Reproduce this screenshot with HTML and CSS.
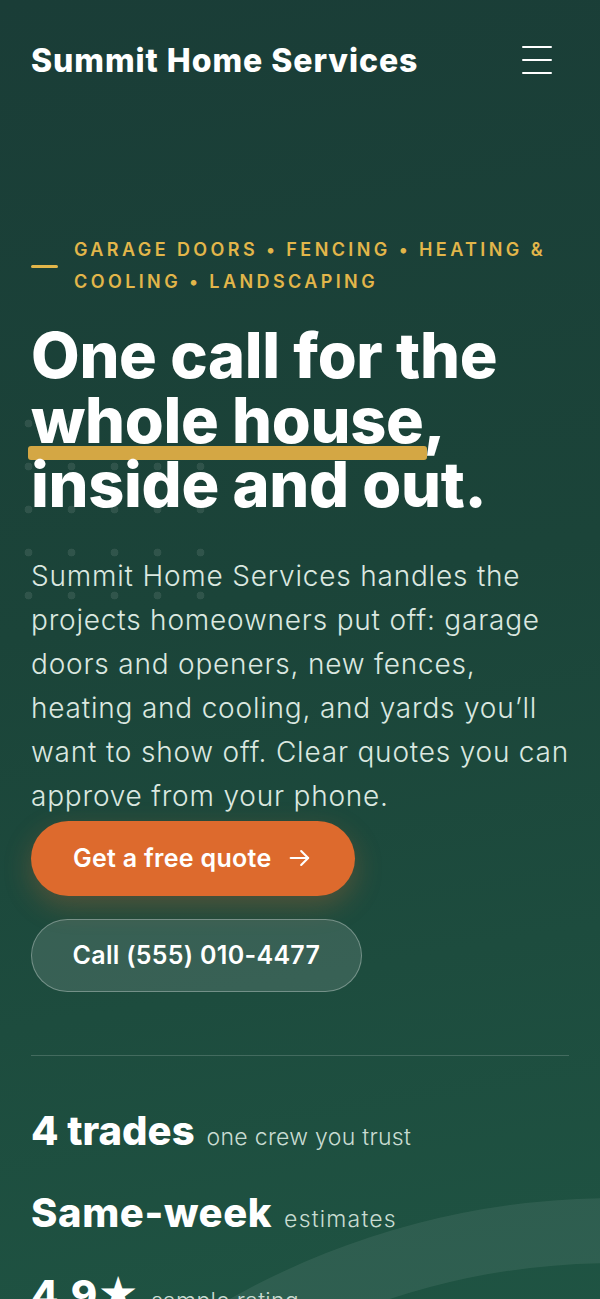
FILE: index.html
```html
<!DOCTYPE html>
<html lang="en">
<head>
<meta charset="utf-8">
<title>Summit Home Services</title>
<link rel="stylesheet" href="styles.css">
</head>
<body>
<div class="page">
  <div class="arc"></div>
  <div class="dots"></div>
  <header class="topbar">
    <div class="brand">Summit Home Services</div>
    <button class="menu" aria-label="Menu">
      <span></span><span></span><span></span>
    </button>
  </header>
  <main class="hero">
    <div class="eyebrow">
      <span class="dash"></span>
      <span class="eyebrow-text">GARAGE DOORS • FENCING • HEATING &amp; COOLING • LANDSCAPING</span>
    </div>
    <h1 class="title">One call for the <span class="mark">whole house</span>, inside and out.</h1>
    <p class="lead">Summit Home Services handles the projects homeowners put off: garage doors and openers, new fences, heating and cooling, and yards you’ll want to show off. Clear quotes you can approve from your phone.</p>
    <div class="actions">
      <a class="btn btn-primary" href="#"><span>Get a free quote</span>
        <svg class="arrow" viewBox="0 0 24 24" width="28" height="28" fill="none" stroke="currentColor" stroke-width="1.8" stroke-linecap="round" stroke-linejoin="round"><path d="M4 12h15"/><path d="M13 6l6 6-6 6"/></svg>
      </a>
      <a class="btn btn-ghost" href="#">Call (555) 010-4477</a>
    </div>
    <hr class="rule">
    <ul class="stats">
      <li><strong>4 trades</strong><span>one crew you trust</span></li>
      <li><strong class="wide">Same-week</strong><span class="wide">estimates</span></li>
      <li><strong>4.9★</strong><span>sample rating</span></li>
    </ul>
  </main>
</div>
</body>
</html>
```
FILE: styles.css
```css
* { box-sizing: border-box; }
html, body { margin: 0; padding: 0; }
body {
  font-family: Inter, "Noto Sans", sans-serif;
  background: #1b4139;
  color: #fff;
  overflow: hidden;
}
.page {
  position: relative;
  min-height: 1299px;
  overflow: hidden;
  background: linear-gradient(170deg, #1a3d37 0%, #1b4439 45%, #1f5443 100%);
  padding: 0 31px;
}
.arc {
  position: absolute;
  left: -170px;
  top: 1198px;
  width: 1570px;
  height: 1570px;
  border-radius: 50%;
  border: 65px solid rgba(255,255,255,0.075);
  pointer-events: none;
}
.dots {
  position: absolute;
  left: 7px;
  top: 402px;
  width: 215px;
  height: 215px;
  background-image: radial-gradient(circle, rgba(255,255,255,0.09) 3.6px, transparent 4.2px);
  background-size: 43px 43px;
  pointer-events: none;
}
.topbar {
  position: relative;
  display: flex;
  align-items: center;
  justify-content: space-between;
  height: 120px;
}
.brand {
  font-weight: 800;
  font-size: 32px;
  letter-spacing: 0.95px;
}
.menu {
  display: flex;
  flex-direction: column;
  gap: 10.5px;
  background: none;
  border: 0;
  padding: 0;
  margin-right: 17px;
  width: 30px;
}
.menu span {
  display: block;
  height: 2.5px;
  width: 30px;
  background: #fff;
  border-radius: 2px;
}
.hero { position: relative; padding-top: 114px; }
.eyebrow {
  display: flex;
  align-items: center;
  gap: 16px;
}
.dash {
  flex: 0 0 27px;
  height: 3px;
  background: #e2b64a;
  border-radius: 2px;
}
.eyebrow-text {
  color: #e2b64a;
  font-weight: 600;
  font-size: 18px;
  letter-spacing: 3.4px;
  line-height: 32px;
}
.title {
  position: relative;
  z-index: 0;
  margin: 25px 0 0;
  font-weight: 800;
  font-size: 63px;
  line-height: 64.5px;
  letter-spacing: -0.3px;
}
.mark {
  position: relative;
  white-space: nowrap;
}
.mark::after {
  content: "";
  position: absolute;
  left: -3px;
  right: -3px;
  bottom: -2px;
  height: 14px;
  background: #d4a744;
  border-radius: 3px;
  z-index: -1;
}
.lead {
  margin: 37px -10px 0 0;
  font-weight: 300;
  font-size: 28px;
  line-height: 44px;
  letter-spacing: 0.8px;
  color: #dbe8e0;
}
.actions {
  display: flex;
  flex-direction: column;
  align-items: flex-start;
  gap: 23px;
  margin-top: 3px;
}
.btn {
  display: inline-flex;
  align-items: center;
  height: 75px;
  padding: 0 42px;
  border-radius: 40px;
  font-weight: 600;
  font-size: 25px;
  letter-spacing: 0.3px;
  color: #fff;
  text-decoration: none;
  white-space: nowrap;
}
.btn-primary {
  gap: 14px;
  padding-right: 41px;
  background: #dd6a2d;
  box-shadow: 0 10px 28px rgba(221,106,45,0.28);
}
.btn-ghost {
  height: 73px;
  padding: 0 40.5px;
  background: rgba(255,255,255,0.12);
  border: 1.5px solid rgba(255,255,255,0.3);
}
.arrow { flex: none; }
.rule {
  margin: 63px 0 0;
  border: 0;
  height: 1px;
  background: rgba(255,255,255,0.17);
}
.stats {
  list-style: none;
  margin: 52px 0 0;
  padding: 0;
  display: flex;
  flex-direction: column;
  gap: 36px;
}
.stats li {
  display: flex;
  align-items: baseline;
  gap: 12px;
}
.stats strong {
  font-weight: 800;
  font-size: 40px;
  line-height: 46px;
  letter-spacing: 0;
}
.stats span {
  font-weight: 300;
  font-size: 23px;
  letter-spacing: 0.3px;
  color: #c9dcd2;
}
.stats strong.wide { letter-spacing: 0.6px; }
.stats span.wide { letter-spacing: 1.2px; }
```
